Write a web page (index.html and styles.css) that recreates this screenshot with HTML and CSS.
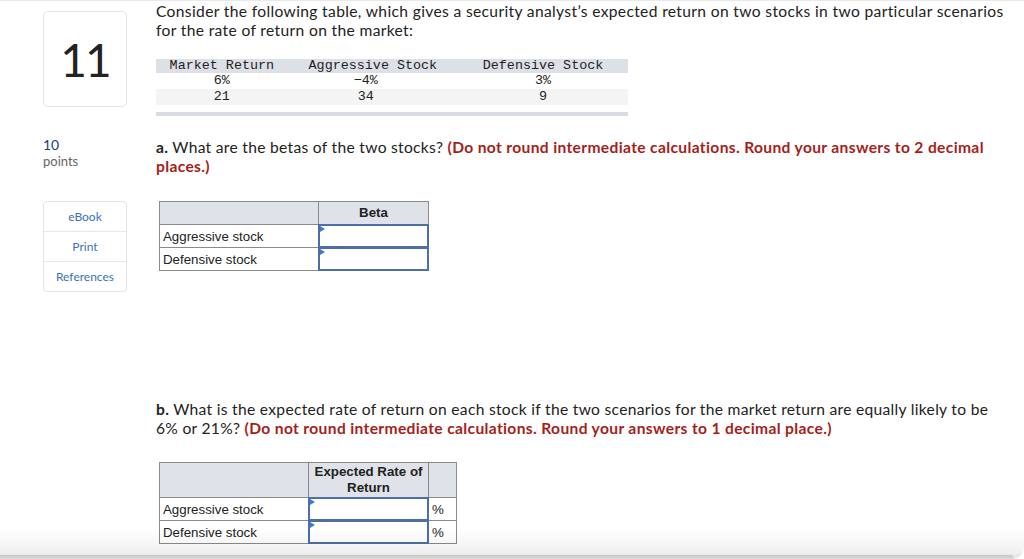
FILE: index.html
```html
<!DOCTYPE html>
<html>
<head>
<meta charset="utf-8">
<link rel="stylesheet" href="styles.css">
</head>
<body>
<div class="page">
  <aside class="side">
    <div class="qnum">11</div>
    <div class="points"><span class="pts-val">10</span><span class="pts-lbl">points</span></div>
    <ul class="links">
      <li>eBook</li>
      <li>Print</li>
      <li>References</li>
    </ul>
  </aside>
  <main class="main">
    <p class="intro">Consider the following table, which gives a security analyst’s expected return on two stocks in two particular scenarios for the rate of return on the market:</p>
    <table class="data">
      <thead>
        <tr><th class="c1">Market Return</th><th class="c2">Aggressive Stock</th><th class="c3">Defensive Stock</th></tr>
      </thead>
      <tbody>
        <tr class="r1"><td class="c1 v1">6%</td><td class="c2 v2">−4%</td><td class="c3 v3">3%</td></tr>
        <tr class="r2"><td class="c1 v1b">21</td><td class="c2 v2">34</td><td class="c3 v3">9</td></tr>
      </tbody>
    </table>
    <div class="databar"></div>

    <p class="q qa"><b>a.</b> What are the betas of the two stocks? <span class="req">(Do not round intermediate calculations. Round your answers to 2 decimal places.)</span></p>
    <table class="ans beta">
      <tr class="hd"><th class="lab"></th><th class="inp-h">Beta</th></tr>
      <tr><td class="lab">Aggressive stock</td><td class="inp"><div class="box"><span class="tri"></span></div></td></tr>
      <tr><td class="lab">Defensive stock</td><td class="inp"><div class="box"><span class="tri"></span></div></td></tr>
    </table>

    <p class="q qb"><b>b.</b> What is the expected rate of return on each stock if the two scenarios for the market return are equally likely to be 6% or 21%? <span class="req">(Do not round intermediate calculations. Round your answers to 1 decimal place.)</span></p>
    <table class="ans er">
      <tr class="hd"><th class="lab"></th><th class="inp-h">Expected Rate of<br>Return</th><th class="pct-h"></th></tr>
      <tr><td class="lab">Aggressive stock</td><td class="inp"><div class="box"><span class="tri"></span></div></td><td class="pct">%</td></tr>
      <tr><td class="lab">Defensive stock</td><td class="inp"><div class="box"><span class="tri"></span></div></td><td class="pct">%</td></tr>
    </table>
  </main>
</div>
<div class="footshadow"></div>
</body>
</html>
```

FILE: styles.css
```css
html, body {
  margin: 0;
  padding: 0;
  background: #fff;
}
body {
  font-family: Lato, "Open Sans", "Liberation Sans", sans-serif;
  color: #222;
  border-top: 1px solid #e9e9e9;
  height: 558px;
  overflow: hidden;
}
.page {
  display: flex;
  gap: 29px;
  padding-left: 43px;
}
.side {
  width: 84px;
  flex: none;
  display: flex;
  flex-direction: column;
}
.qnum {
  margin-top: 10px;
  height: 94px;
  border: 1px solid #e4e4e4;
  border-radius: 5px;
  display: flex;
  align-items: center;
  justify-content: center;
  font-size: 46px;
  color: #222;
  letter-spacing: -2px;
}
.points {
  margin-top: 29px;
  display: flex;
  flex-direction: column;
  font-size: 13px;
  line-height: 17px;
}
.pts-val {
  color: #1c3f78;
  font-size: 14px;
}
.pts-lbl {
  color: #666;
}
.links {
  list-style: none;
  margin: 31px 0 0;
  padding: 0;
  border: 1px solid #e4e4e4;
  border-radius: 4px;
}
.links li {
  height: 29px;
  display: flex;
  align-items: center;
  justify-content: center;
  font-size: 12px;
  color: #3a72b9;
  border-top: 1px solid #e8e8e8;
}
.links li:first-child {
  border-top: none;
  height: 29px;
}
.main {
  width: 854px;
  flex: none;
}
.intro {
  margin: 1px 0 0;
  font-size: 15.6px;
  line-height: 19px;
  letter-spacing: 0.35px;
  color: #222;
}
.data {
  margin-top: 19px;
  border-collapse: collapse;
  width: 472px;
  font-family: "Liberation Mono", "DejaVu Sans Mono", monospace;
  font-size: 13.4px;
  color: #222;
}
.data th, .data td {
  padding: 0;
  text-align: center;
  font-weight: normal;
}
.data th {
  background: #dde0e6;
  height: 14px;
  line-height: 14px;
}
.data td {
  height: 16px;
  line-height: 16px;
}
.data .r2 td {
  background: #f4f4f4;
}
.data .c1 { width: 136px; }
.data .c2 { width: 161px; }
.data .c3 { width: 175px; }
.data .v2 { padding-right: 14px; }
.databar {
  margin-top: 7px;
  width: 472px;
  height: 4px;
  background: #d9dce2;
}
.q {
  margin: 0;
  font-size: 15.6px;
  line-height: 19px;
  letter-spacing: 0.3px;
  color: #222;
}
.q b {
  font-weight: 700;
}
.req {
  color: #a61e1a;
  font-weight: 700;
  letter-spacing: 0.35px;
}
.qa {
  margin-top: 22px;
}
.qb {
  margin-top: 129px;
}
.ans {
  margin-left: 3px;
  border-collapse: collapse;
  font-family: "Liberation Sans", Arial, sans-serif;
  font-size: 13.3px;
  color: #222;
  letter-spacing: 0;
}
.beta {
  margin-top: 25px;
}
.er {
  margin-top: 24px;
}
.ans th, .ans td {
  border: 1px solid #8a8a8a;
  padding: 0;
}
.ans th {
  background: #dfe2e8;
  font-weight: 700;
  text-align: center;
  line-height: 16px;
}
.beta .hd th {
  height: 22px;
}
.er .hd th {
  height: 34px;
}
.ans td.lab {
  padding-left: 3px;
  text-align: left;
}
.beta .lab { width: 155px; }
.beta .inp-h, .beta .inp { width: 109px; }
.er .lab { width: 145px; }
.er .inp-h, .er .inp { width: 119px; }
.er .pct-h, .er .pct { width: 24px; }
.ans td {
  height: 22px;
}
.ans td.pct {
  padding-left: 3px;
}
.ans td.inp {
  position: relative;
  padding: 0;
}
.box {
  position: relative;
  height: 20px;
  border: 2px solid #4a6fa9;
  margin: -1px;
}
.tri {
  position: absolute;
  left: 0;
  top: 0;
  width: 0;
  height: 0;
  border-top: 3px solid transparent;
  border-bottom: 3px solid transparent;
  border-left: 5px solid #3f7ad0;
}
.footshadow {
  position: fixed;
  left: 0;
  right: 0;
  bottom: 0;
  height: 30px;
  background: linear-gradient(to bottom, rgba(0,0,0,0) 0%, rgba(0,0,0,0.06) 80%, rgba(0,0,0,0.09) 86%);
  border-radius: 0 0 12px 0;
  pointer-events: none;
}
.footshadow::after {
  content: "";
  position: absolute;
  left: 0;
  right: 10px;
  bottom: 0;
  height: 4px;
  background: linear-gradient(to bottom, #c4c4c4, #dcdcdc);
  border-radius: 0 4px 0 0;
}
```
